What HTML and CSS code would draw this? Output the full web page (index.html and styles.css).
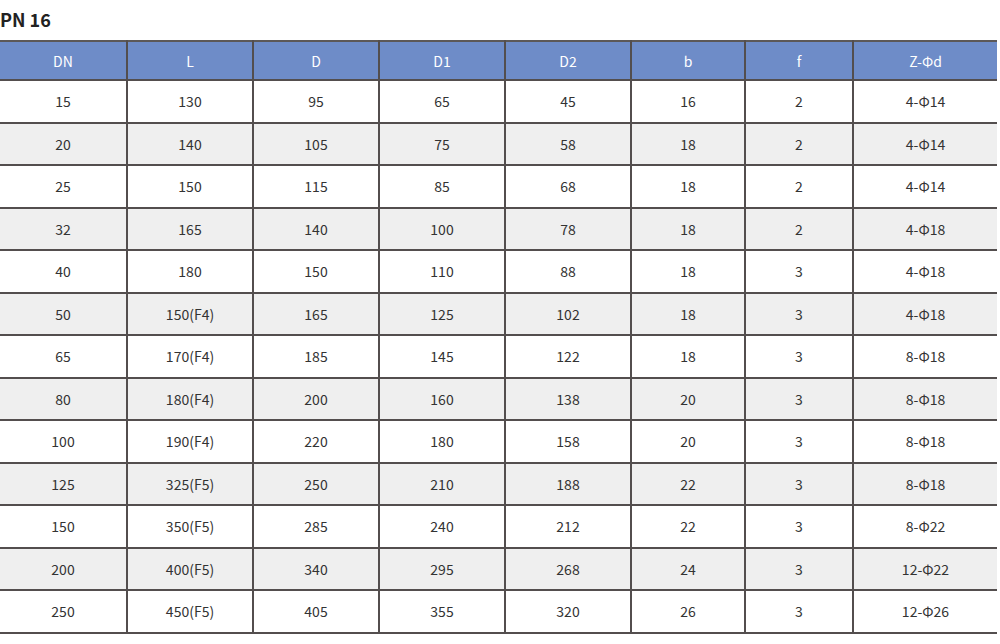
FILE: index.html
```html
<!DOCTYPE html>
<html>
<head>
<meta charset="utf-8">
<link rel="stylesheet" href="styles.css">
</head>
<body>
<div class="title">PN 16</div>
<table class="spec">
<colgroup>
<col style="width:127px"><col style="width:126px"><col style="width:126px"><col style="width:126px"><col style="width:126px"><col style="width:114px"><col style="width:108px"><col style="width:144px">
</colgroup>
<thead>
<tr><th>DN</th><th>L</th><th>D</th><th>D1</th><th>D2</th><th>b</th><th>f</th><th>Z-Φd</th></tr>
</thead>
<tbody>
<tr><td>15</td><td>130</td><td>95</td><td>65</td><td>45</td><td>16</td><td>2</td><td>4-Φ14</td></tr>
<tr><td>20</td><td>140</td><td>105</td><td>75</td><td>58</td><td>18</td><td>2</td><td>4-Φ14</td></tr>
<tr><td>25</td><td>150</td><td>115</td><td>85</td><td>68</td><td>18</td><td>2</td><td>4-Φ14</td></tr>
<tr><td>32</td><td>165</td><td>140</td><td>100</td><td>78</td><td>18</td><td>2</td><td>4-Φ18</td></tr>
<tr><td>40</td><td>180</td><td>150</td><td>110</td><td>88</td><td>18</td><td>3</td><td>4-Φ18</td></tr>
<tr><td>50</td><td>150(F4)</td><td>165</td><td>125</td><td>102</td><td>18</td><td>3</td><td>4-Φ18</td></tr>
<tr><td>65</td><td>170(F4)</td><td>185</td><td>145</td><td>122</td><td>18</td><td>3</td><td>8-Φ18</td></tr>
<tr><td>80</td><td>180(F4)</td><td>200</td><td>160</td><td>138</td><td>20</td><td>3</td><td>8-Φ18</td></tr>
<tr><td>100</td><td>190(F4)</td><td>220</td><td>180</td><td>158</td><td>20</td><td>3</td><td>8-Φ18</td></tr>
<tr><td>125</td><td>325(F5)</td><td>250</td><td>210</td><td>188</td><td>22</td><td>3</td><td>8-Φ18</td></tr>
<tr><td>150</td><td>350(F5)</td><td>285</td><td>240</td><td>212</td><td>22</td><td>3</td><td>8-Φ22</td></tr>
<tr><td>200</td><td>400(F5)</td><td>340</td><td>295</td><td>268</td><td>24</td><td>3</td><td>12-Φ22</td></tr>
<tr><td>250</td><td>450(F5)</td><td>405</td><td>355</td><td>320</td><td>26</td><td>3</td><td>12-Φ26</td></tr>
</tbody>
</table>
</body>
</html>
```

FILE: styles.css
```css
html, body {
  margin: 0;
  padding: 0;
  background: #ffffff;
}
body {
  font-family: "Noto Sans CJK SC", "Noto Sans", sans-serif;
  color: #333333;
}
.title {
  height: 40px;
  line-height: 38px;
  font-size: 18px;
  font-weight: bold;
  color: #222222;
  padding-left: 0;
}
.spec {
  width: 997px;
  border-collapse: collapse;
  table-layout: fixed;
  font-size: 14px;
}
.spec th, .spec td {
  text-align: center;
  padding: 0;
  border: 2px solid #534e4e;
  border-top-color: #4a4646;
}
.spec th:first-child, .spec td:first-child {
  border-left: none;
}
.spec th:last-child, .spec td:last-child {
  border-right: none;
}
.spec th {
  height: 37px;
  background: #6e8cc8;
  color: #ffffff;
  font-weight: normal;
  border-top-color: #5c5858;
}
.spec td {
  height: 40.5px;
  background: #ffffff;
}
.spec tbody tr:nth-child(even) td {
  background: #efefef;
}
```
